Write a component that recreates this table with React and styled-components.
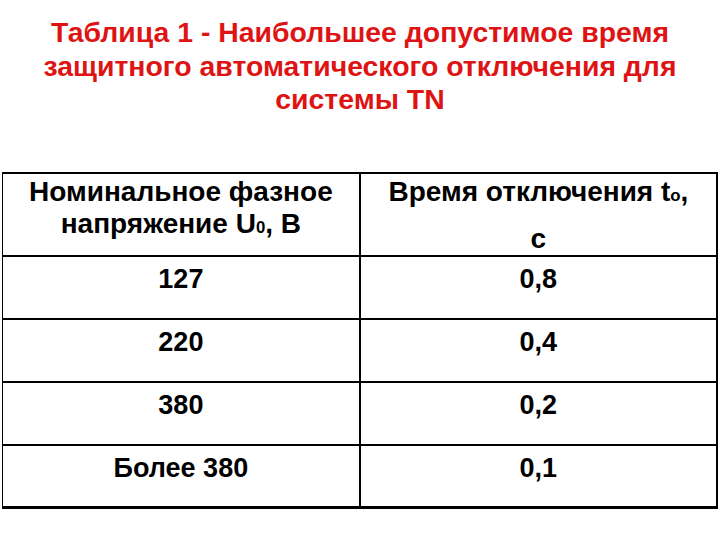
import styled, { createGlobalStyle } from "styled-components";

const GlobalStyle = createGlobalStyle`
  html, body {
    margin: 0;
    padding: 0;
    background: #ffffff;
  }
  body {
    font-family: "Liberation Sans", Arial, sans-serif;
  }
`;

const rows = [
  { voltage: "127", time: "0,8" },
  { voltage: "220", time: "0,4" },
  { voltage: "380", time: "0,2" },
  { voltage: "Более 380", time: "0,1" },
];

export default function App() {
  return (
    <Page>
      <GlobalStyle />
      <Title>
        Таблица 1 - Наибольшее допустимое время
        <br />
        защитного автоматического отключения для
        <br />
        системы TN
      </Title>

      <Table>
        <tbody>
          <tr>
            <HeadCell>
              Номинальное фазное
              <br />
              напряжение U<Sub>0</Sub>, В
            </HeadCell>
            <HeadCell>
              Время отключения t<Sub>о</Sub>,
              <Unit>с</Unit>
            </HeadCell>
          </tr>
          {rows.map((row) => (
            <tr key={row.voltage}>
              <Cell>{row.voltage}</Cell>
              <Cell>{row.time}</Cell>
            </tr>
          ))}
        </tbody>
      </Table>
    </Page>
  );
}

const Page = styled.div`
  width: 720px;
  height: 540px;
  padding-top: 16px;
  box-sizing: border-box;
  display: flex;
  flex-direction: column;
  align-items: center;
`;

const Title = styled.h1`
  margin: 0;
  font-size: 28.4px;
  font-weight: bold;
  line-height: 33.5px;
  color: #de1414;
  text-align: center;
  white-space: nowrap;
`;

const Table = styled.table`
  margin-top: 55px;
  width: 716px;
  border-collapse: collapse;
  table-layout: fixed;
  border-top: 2px solid #000;
  border-bottom: 3px solid #000;
  border-left: 1px solid #000;
  border-right: 2px solid #000;
`;

const HeadCell = styled.td`
  height: 80px;
  padding: 2px 0 0;
  box-sizing: border-box;
  vertical-align: top;
  text-align: center;
  font-size: 28px;
  font-weight: bold;
  line-height: 32px;
  color: #000;
  border-bottom: 2px solid #000;
  white-space: nowrap;

  & + & {
    border-left: 2px solid #000;
  }
`;

const Unit = styled.span`
  display: block;
  margin-top: 11px;
`;

const Sub = styled.span`
  font-size: 60%;
  vertical-align: baseline;
`;

const Cell = styled.td`
  height: 63px;
  padding: 6px 0 0;
  box-sizing: border-box;
  vertical-align: top;
  text-align: center;
  font-size: 27px;
  font-weight: bold;
  line-height: 32px;
  color: #000;
  border-bottom: 2px solid #000;

  & + & {
    border-left: 2px solid #000;
  }
`;
